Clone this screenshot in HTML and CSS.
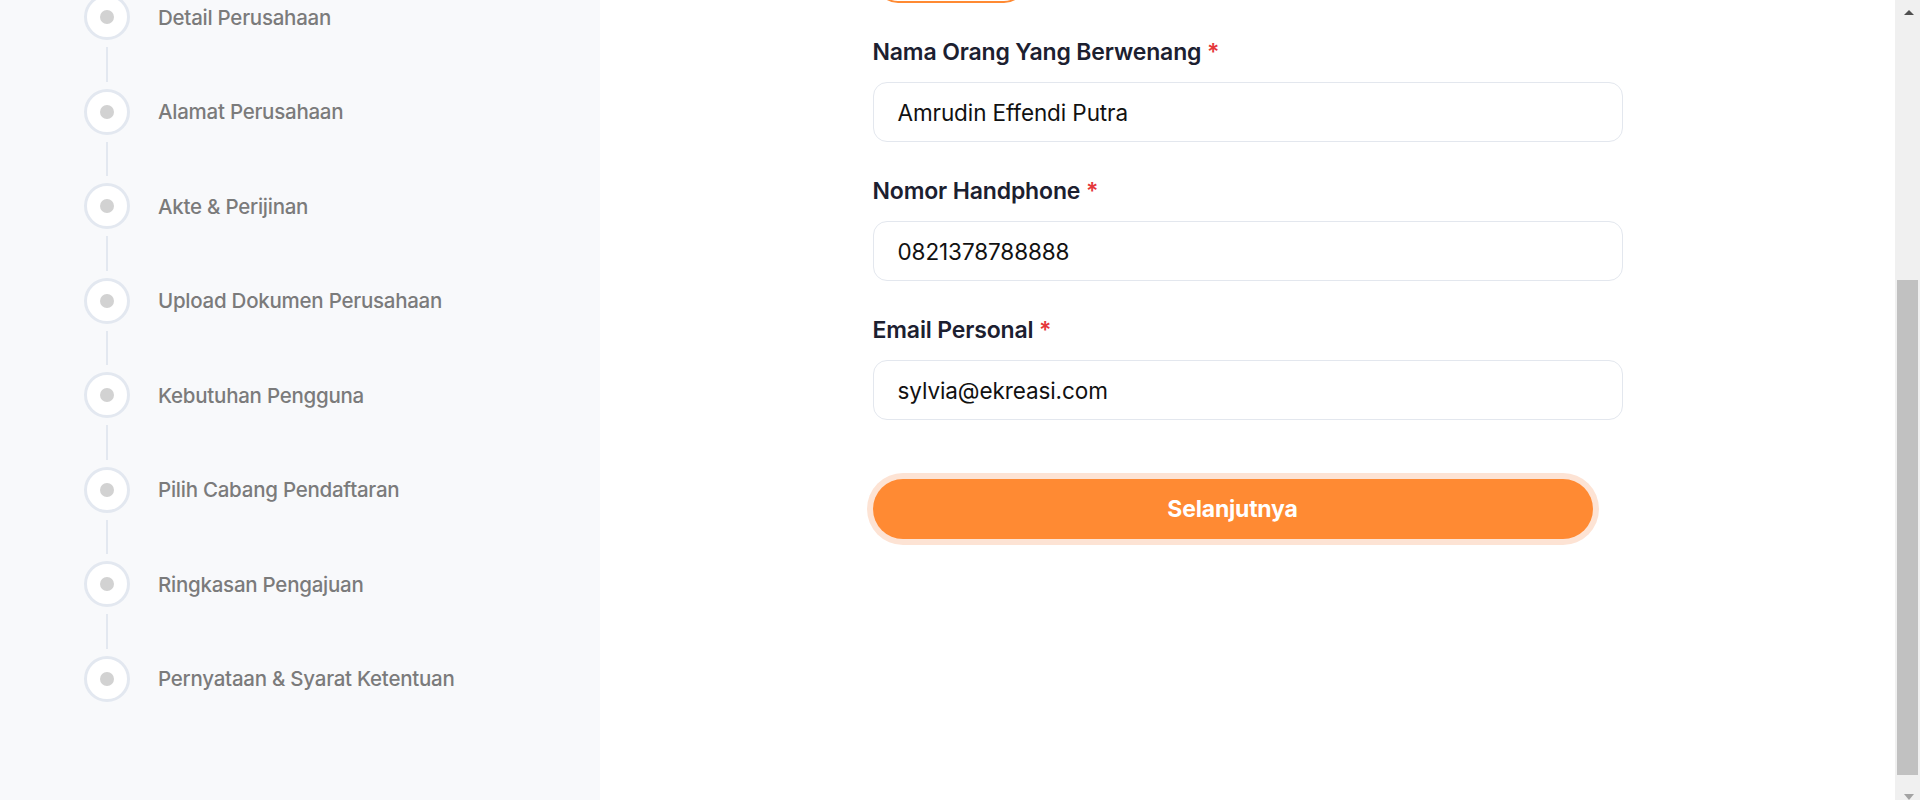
FILE: index.html
```html
<!DOCTYPE html>
<html lang="id">
<head>
<meta charset="utf-8">
<title>Registrasi</title>
<link rel="stylesheet" href="styles.css">
</head>
<body>
<div class="page">
  <aside class="sidebar">
    <ol class="steps">
      <li class="step"><span class="dot"></span><span class="step-label">Detail Perusahaan</span></li>
      <li class="connector"></li>
      <li class="step"><span class="dot"></span><span class="step-label">Alamat Perusahaan</span></li>
      <li class="connector"></li>
      <li class="step"><span class="dot"></span><span class="step-label">Akte &amp; Perijinan</span></li>
      <li class="connector"></li>
      <li class="step"><span class="dot"></span><span class="step-label">Upload Dokumen Perusahaan</span></li>
      <li class="connector"></li>
      <li class="step"><span class="dot"></span><span class="step-label">Kebutuhan Pengguna</span></li>
      <li class="connector"></li>
      <li class="step"><span class="dot"></span><span class="step-label">Pilih Cabang Pendaftaran</span></li>
      <li class="connector"></li>
      <li class="step"><span class="dot"></span><span class="step-label">Ringkasan Pengajuan</span></li>
      <li class="connector"></li>
      <li class="step"><span class="dot"></span><span class="step-label">Pernyataan &amp; Syarat Ketentuan</span></li>
    </ol>
  </aside>
  <main class="main">
    <form class="form">
      <div class="pill-top"></div>
      <div class="field">
        <label class="label">Nama Orang Yang Berwenang <span class="req">*</span></label>
        <div class="input">Amrudin Effendi Putra</div>
      </div>
      <div class="field">
        <label class="label">Nomor Handphone <span class="req">*</span></label>
        <div class="input">0821378788888</div>
      </div>
      <div class="field">
        <label class="label">Email Personal <span class="req">*</span></label>
        <div class="input">sylvia@ekreasi.com</div>
      </div>
      <div class="btn-ring"><button type="button" class="btn">Selanjutnya</button></div>
    </form>
  </main>
  <div class="scrollbar">
    <div class="arrow up"></div>
    <div class="track"><div class="thumb"></div></div>
    <div class="arrow down"></div>
  </div>
</div>
</body>
</html>
```

FILE: styles.css
```css
* { box-sizing: border-box; }
html, body { margin: 0; padding: 0; }
body {
  font-family: Inter, "Noto Sans", sans-serif;
  background: #ffffff;
  height: 800px;
  overflow: hidden;
}
.page {
  display: flex;
  height: 800px;
}
.sidebar {
  width: 600px;
  flex: 0 0 600px;
  background: #f8f9fb;
  padding-left: 84px;
  overflow: hidden;
}
.steps {
  list-style: none;
  margin: -6px 0 0 0;
  padding: 0;
}
.step {
  display: flex;
  align-items: center;
  height: 46px;
  gap: 28px;
}
.dot {
  width: 46px;
  height: 46px;
  flex: 0 0 46px;
  border-radius: 50%;
  border: 3px solid #e3e8f0;
  background: #ffffff;
  display: flex;
  align-items: center;
  justify-content: center;
}
.dot::after {
  content: "";
  width: 14px;
  height: 14px;
  border-radius: 50%;
  background: #d2d2d2;
}
.step-label {
  font-size: 20.5px;
  font-weight: 500;
  color: #7b7b7b;
  letter-spacing: -0.25px;
}
.connector {
  width: 2px;
  height: 34.5px;
  margin: 7px 0 7px 22px;
  background: #e3e8f0;
}
.main {
  flex: 1;
  display: flex;
  justify-content: center;
}
.form {
  width: 750px;
  margin: -41px 0 0 0;
  display: flex;
  flex-direction: column;
}
.pill-top {
  width: 150px;
  height: 44px;
  border: 2px solid #ff8a33;
  border-radius: 22px;
  margin: 0 0 35px 3px;
}
.field {
  display: flex;
  flex-direction: column;
  gap: 16px;
  margin-bottom: 35px;
}
.label {
  font-size: 23px;
  line-height: 28px;
  font-weight: 600;
  color: #1c2030;
  letter-spacing: -0.15px;
}
.req { color: #e5383b; }
.input {
  height: 60px;
  border: 1px solid #e3e7ee;
  border-radius: 14px;
  background: #ffffff;
  padding: 0 24px;
  display: flex;
  align-items: center;
  font-size: 22.5px;
  color: #111111;
  letter-spacing: -0.1px;
}
.btn-ring {
  width: 732px;
  margin: 18px 0 0 -6px;
  padding: 6px;
  border-radius: 40px;
  background: #fde3d4;
  align-self: flex-start;
}
.btn {
  display: block;
  width: 720px;
  height: 60px;
  border: none;
  border-radius: 30px;
  background: #ff8a33;
  color: #ffffff;
  font-family: Inter, "Noto Sans", sans-serif;
  font-size: 23px;
  font-weight: 700;
  letter-spacing: -0.2px;
}
.scrollbar {
  width: 25px;
  flex: 0 0 25px;
  background: #f0f0f0;
  display: flex;
  flex-direction: column;
  align-items: center;
  padding-left: 2px;
}
.arrow {
  width: 0;
  height: 0;
  border-left: 5.5px solid transparent;
  border-right: 5.5px solid transparent;
}
.arrow.up {
  margin-top: 10px;
  border-bottom: 5px solid #505050;
}
.arrow.down {
  margin-top: 8px;
  border-top: 6px solid #a3a3a3;
}
.track {
  flex: 1;
  width: 100%;
  display: flex;
  flex-direction: column;
  padding-top: 265px;
}
.thumb {
  width: 21px;
  height: 495px;
  background: #c1c1c1;
}
```
